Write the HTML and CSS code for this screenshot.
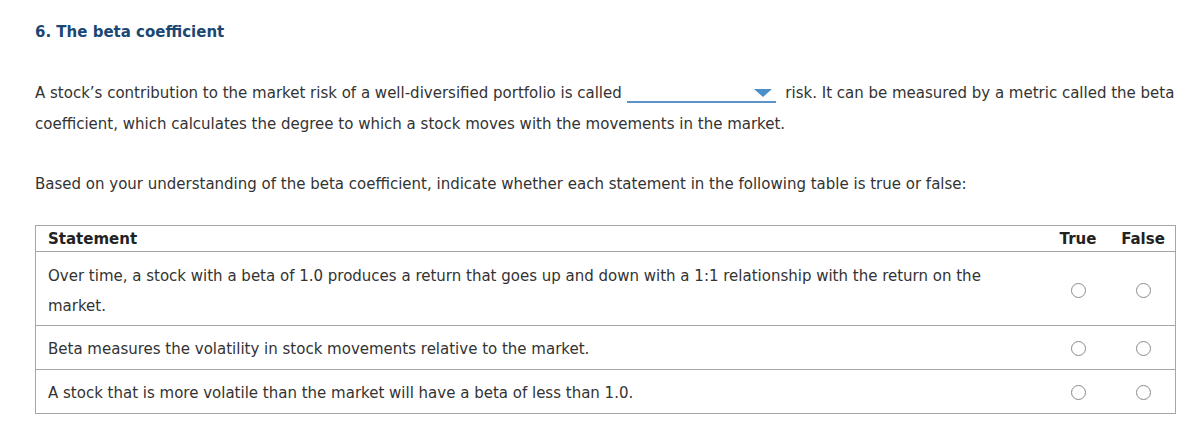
FILE: index.html
```html
<!DOCTYPE html>
<html>
<head>
<meta charset="utf-8">
<link rel="stylesheet" href="styles.css">
</head>
<body>
<div class="page">
  <h2 class="title">6. The beta coefficient</h2>
  <p class="para">A stock’s contribution to the market risk of a well-diversified portfolio is called <span class="dropdown"><span class="tri"></span></span> risk. It can be measured by a metric called the beta coefficient, which calculates the degree to which a stock moves with the movements in the market.</p>
  <p class="para2">Based on your understanding of the beta coefficient, indicate whether each statement in the following table is true or false:</p>
  <table class="tbl">
    <thead>
      <tr><th class="st">Statement</th><th class="tf">True</th><th class="tf last">False</th></tr>
    </thead>
    <tbody>
      <tr class="tall"><td class="st">Over time, a stock with a beta of 1.0 produces a return that goes up and down with a 1:1 relationship with the return on the market.</td><td class="tf"><span class="radio"></span></td><td class="tf last"><span class="radio"></span></td></tr>
      <tr><td class="st">Beta measures the volatility in stock movements relative to the market.</td><td class="tf"><span class="radio"></span></td><td class="tf last"><span class="radio"></span></td></tr>
      <tr><td class="st">A stock that is more volatile than the market will have a beta of less than 1.0.</td><td class="tf"><span class="radio"></span></td><td class="tf last"><span class="radio"></span></td></tr>
    </tbody>
  </table>
</div>
</body>
</html>
```
FILE: styles.css
```css
html, body { margin: 0; padding: 0; background: #fff; }
body { font-family: "DejaVu Sans", Verdana, sans-serif; font-size: 15px; color: #333; }
.page { padding: 22px 23px 0 35px; }
.title { margin: 0; font-size: 15px; font-weight: bold; color: #1b4873; line-height: 20px; }
.para { margin: 36px 0 0 0; line-height: 31px; }
.dropdown { display: inline-block; width: 149px; height: 16px; border-bottom: 2px solid #5b93c8; vertical-align: -5px; position: relative; margin: 0 5px 0 0; }
.tri { position: absolute; right: 4px; top: 4px; width: 0; height: 0; border-left: 9.5px solid transparent; border-right: 9.5px solid transparent; border-top: 8px solid #4a8fc9; }
.para2 { margin: 34px 0 0 0; line-height: 20px; }
.tbl { margin-top: 31px; width: 1141px; border-collapse: collapse; border: 1px solid #a6a6a6; }
.tbl th { font-weight: bold; color: #222; height: 25px; padding: 0; border-bottom: 1px solid #a6a6a6; }
.tbl td { border-bottom: 1px solid #a6a6a6; padding: 2px 0 0 0; height: 41px; line-height: 30px; }
.tbl tr.tall td { height: 69px; padding-top: 4px; }
.tbl .st { text-align: left; padding-left: 12px; padding-right: 40px; }
.tbl .tf { width: 66px; text-align: center; padding-top: 0; }
.tbl tr.tall .tf { padding-top: 2px; }
.tbl .tf.last { width: 64px; }
.radio { display: inline-block; width: 13px; height: 13px; border: 1px solid #8a8a8a; border-radius: 50%; vertical-align: middle; }
```
